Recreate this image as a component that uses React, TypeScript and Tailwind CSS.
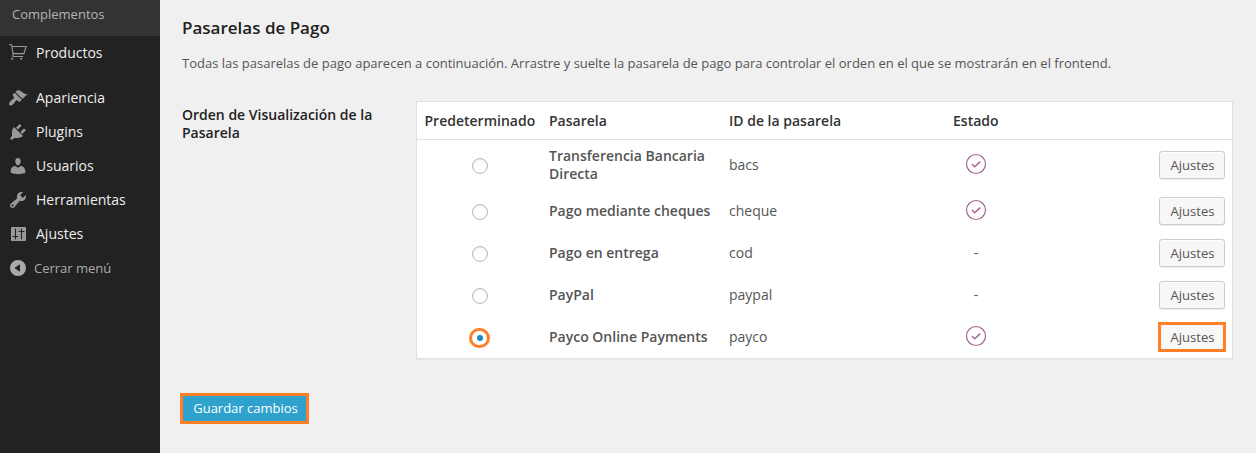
import type { ReactNode } from "react";

function Icon({ children }: { children: ReactNode }) {
  return (
    <svg viewBox="0 0 20 20" className="ml-2 h-5 w-5 shrink-0 fill-[#999]">
      {children}
    </svg>
  );
}

const cart = (
  <g fill="none" stroke="#999" strokeWidth="1.1">
    <path d="M1 1.700h2.600L5 10.600v2.900h10.200" />
    <path d="M3.900 3.500h14.300l-2.300 7.100H5" />
    <circle cx="4.200" cy="15.800" r=".5" />
    <circle cx="13.200" cy="15.800" r=".5" />
  </g>
);
const brush = (
  <path d="M14.48 11.06L7.41 3.99l1.5-1.5c.5-.56 2.3-.47 3.51.32 1.21.8 1.43 1.28 2.91 2.1 1.18.64 2.45 1.26 4.45.85zm-.71.71L6.7 4.7 4.93 6.47c-.39.39-.39 1.02 0 1.41l1.06 1.06c.39.39.39 1.03 0 1.42-.6.6-1.43 1.11-2.21 1.69-.35.26-.7.53-1.01.84C1.43 14.23.4 16.08 1.4 17.07c.99 1 2.84-.03 4.18-1.36.31-.31.58-.66.85-1.02.57-.78 1.08-1.61 1.69-2.21.39-.39 1.02-.39 1.41 0l1.06 1.06c.39.39 1.02.39 1.41 0z" />
);
const plug = (
  <path d="M13.11 4.36L9.87 7.6 8 5.73l3.24-3.24c.35-.34 1.05-.2 1.56.32.52.51.66 1.21.31 1.55zm-8 1.77l.91-1.12 9.01 9.01-1.19.84c-.71.71-2.63 1.16-3.82 1.16H6.14L4.9 17.26c-.59.59-1.54.59-2.12 0-.59-.58-.59-1.53 0-2.12l1.24-1.24v-3.88c0-1.13.4-3.19 1.09-3.89zm7.26 3.97l3.24-3.24c.34-.35 1.04-.21 1.55.31.52.51.66 1.21.31 1.55l-3.24 3.25z" />
);
const user = (
  <path d="M10 9.25c-2.27 0-2.73-3.44-2.73-3.44C7 4.02 7.82 2 9.97 2c2.16 0 2.98 2.02 2.71 3.81 0 0-.41 3.44-2.68 3.44zm0 2.57L12.72 10c2.39 0 4.52 2.33 4.52 4.53v2.49s-3.65 1.13-7.24 1.13c-3.65 0-7.24-1.13-7.24-1.13v-2.49c0-2.25 1.94-4.48 4.47-4.48z" />
);
const wrench = (
  <path d="M16.68 9.77c-1.34 1.34-3.3 1.67-4.95.99l-5.41 6.52c-.99.99-2.59.99-3.58 0s-.99-2.59 0-3.57l6.52-5.42c-.68-1.65-.35-3.61.99-4.95 1.28-1.28 3.12-1.62 4.72-1.06l-2.89 2.89 2.82 2.82 2.86-2.87c.53 1.58.18 3.39-1.08 4.65zM3.81 16.21c.4.39 1.04.39 1.43 0 .4-.4.4-1.04 0-1.43-.39-.4-1.03-.4-1.43 0-.39.39-.39 1.03 0 1.43z" />
);
const sliders = (
  <g>
    <rect x="3" y="3" width="15" height="14" rx=".7" />
    <path
      d="M7.500 5v10M5 12.500h5M13.500 5v10M11 7.500h5"
      fill="none"
      stroke="#222"
      strokeWidth="1.150"
      strokeLinecap="round"
    />
  </g>
);

const menu = [
  { label: "Apariencia", icon: brush },
  { label: "Plugins", icon: plug },
  { label: "Usuarios", icon: user },
  { label: "Herramientas", icon: wrench },
  { label: "Ajustes", icon: sliders },
];

function MenuItem({ label, icon }: { label: string; icon: ReactNode }) {
  return (
    <li className="flex h-[34px] items-center text-sm text-[#eee]">
      <Icon>{icon}</Icon>
      <span className="ml-2">{label}</span>
    </li>
  );
}

function Sidebar() {
  return (
    <nav className="w-40 shrink-0 bg-[#222]">
      <div className="h-9 bg-[#333] pt-[5px] pl-3 text-[13px] leading-[18px] text-[#b4b4b4]">
        Complementos
      </div>
      <ul>
        <MenuItem label="Productos" icon={cart} />
      </ul>
      <ul className="mt-[11px]">
        {menu.map((m) => (
          <MenuItem key={m.label} {...m} />
        ))}
      </ul>
      <div className="flex h-[34px] items-center text-[13px] text-[#aaa]">
        <Icon>
          <path
            fill="#aaa"
            fillRule="evenodd"
            d="M10 2a8 8 0 1 1 0 16 8 8 0 0 1 0-16zm2 4.200L6.300 10l5.700 3.800z"
          />
        </Icon>
        <span className="ml-1.5 pt-0.5">Cerrar menú</span>
      </div>
    </nav>
  );
}

function Check() {
  return (
    <svg viewBox="0 0 22 22" className="-mt-0.5 h-[22px] w-[22px] fill-none stroke-[#a16696]">
      <circle cx="11" cy="11" r="9.5" strokeWidth="1.2" />
      <path d="M7 11l2.700 2.700L15.200 8.600" strokeWidth="1.500" />
    </svg>
  );
}

const gateways = [
  { name: "Transferencia Bancaria Directa", id: "bacs", on: true, selected: false },
  { name: "Pago mediante cheques", id: "cheque", on: true, selected: false },
  { name: "Pago en entrega", id: "cod", on: false, selected: false },
  { name: "PayPal", id: "paypal", on: false, selected: false },
  { name: "Payco Online Payments", id: "payco", on: true, selected: true },
];

function Radio({ selected }: { selected: boolean }) {
  return selected ? (
    <span className="mt-0.5 flex h-5 w-[21px] items-center justify-center rounded-full border-3 border-[#ff7f27] bg-white">
      <span className="h-1.5 w-1.5 rounded-full bg-[#1e8cbe]" />
    </span>
  ) : (
    <span className="mt-0.5 h-4 w-4 rounded-full border border-[#b4b9be] bg-white shadow-[inset_0_1px_2px_rgba(0,0,0,0.1)]" />
  );
}

const columns = "grid grid-cols-[125px_180px_180px_126px_1fr]";

function GatewayTable() {
  return (
    <div className="h-[258px] w-[817px] border border-[#e1e1e1] bg-white text-sm leading-[18px] shadow-[0_1px_1px_rgba(0,0,0,0.04)]">
      <div className={`${columns} h-[38px] items-center border-b border-[#e1e1e1] font-semibold text-[#333]`}>
        <span className="pl-[7.5px]">Predeterminado</span>
        <span className="pl-[7px]">Pasarela</span>
        <span className="pl-[7px]">ID de la pasarela</span>
        <span className="pl-[51px]">Estado</span>
      </div>
      {gateways.map((g) => (
        <div key={g.id} className={`${columns} ${g.id === "bacs" ? "h-[50px]" : "h-[42px]"} items-center text-[#555]`}>
          <span className="flex justify-center">
            <Radio selected={g.selected} />
          </span>
          <span className="pl-[7px] font-semibold">{g.name}</span>
          <span className="pl-[7px]">{g.id}</span>
          <span className="flex justify-center pl-[22px]">{g.on ? <Check /> : "-"}</span>
          <span className={`flex justify-end ${g.selected ? "pr-1.5" : "pr-[7px]"}`}>
            <button
              className={
                g.selected
                  ? "h-[30px] w-[68px] border-3 border-[#ff7f27] bg-[#f7f7f7] pl-px text-[13px]"
                  : "h-7 w-[66px] rounded-[3px] border border-[#ccc] bg-[#f7f7f7] pl-px text-[13px] shadow-[inset_0_1px_0_#fff,0_1px_0_rgba(0,0,0,0.08)]"
              }
            >
              Ajustes
            </button>
          </span>
        </div>
      ))}
    </div>
  );
}

export default function App() {
  return (
    <div className="flex h-[453px] w-[1256px] overflow-hidden bg-[#f0f0f0] font-['Open_Sans',sans-serif]">
      <Sidebar />
      <main className="flex-1 pt-[17px] pl-[22px]">
        <h3 className="text-[17px] leading-[22px] font-semibold text-[#222]">Pasarelas de Pago</h3>
        <p className="mt-[14px] text-[13px] leading-5 text-[#555]">
          Todas las pasarelas de pago aparecen a continuación. Arrastre y suelte la pasarela de pago para controlar
          el orden en el que se mostrarán en el frontend.
        </p>
        <div className="mt-7 flex">
          <div className="w-[234px] shrink-0 pt-[5px] pr-8 text-sm leading-[18px] font-semibold text-[#222]">
            Orden de Visualización de la Pasarela
          </div>
          <GatewayTable />
        </div>
        <button className="mt-[34px] -ml-0.5 h-[31px] w-[129px] border-3 border-[#ff7f27] bg-[#2ea2cc] pl-0.5 text-[13px] text-white">
          Guardar cambios
        </button>
      </main>
    </div>
  );
}
